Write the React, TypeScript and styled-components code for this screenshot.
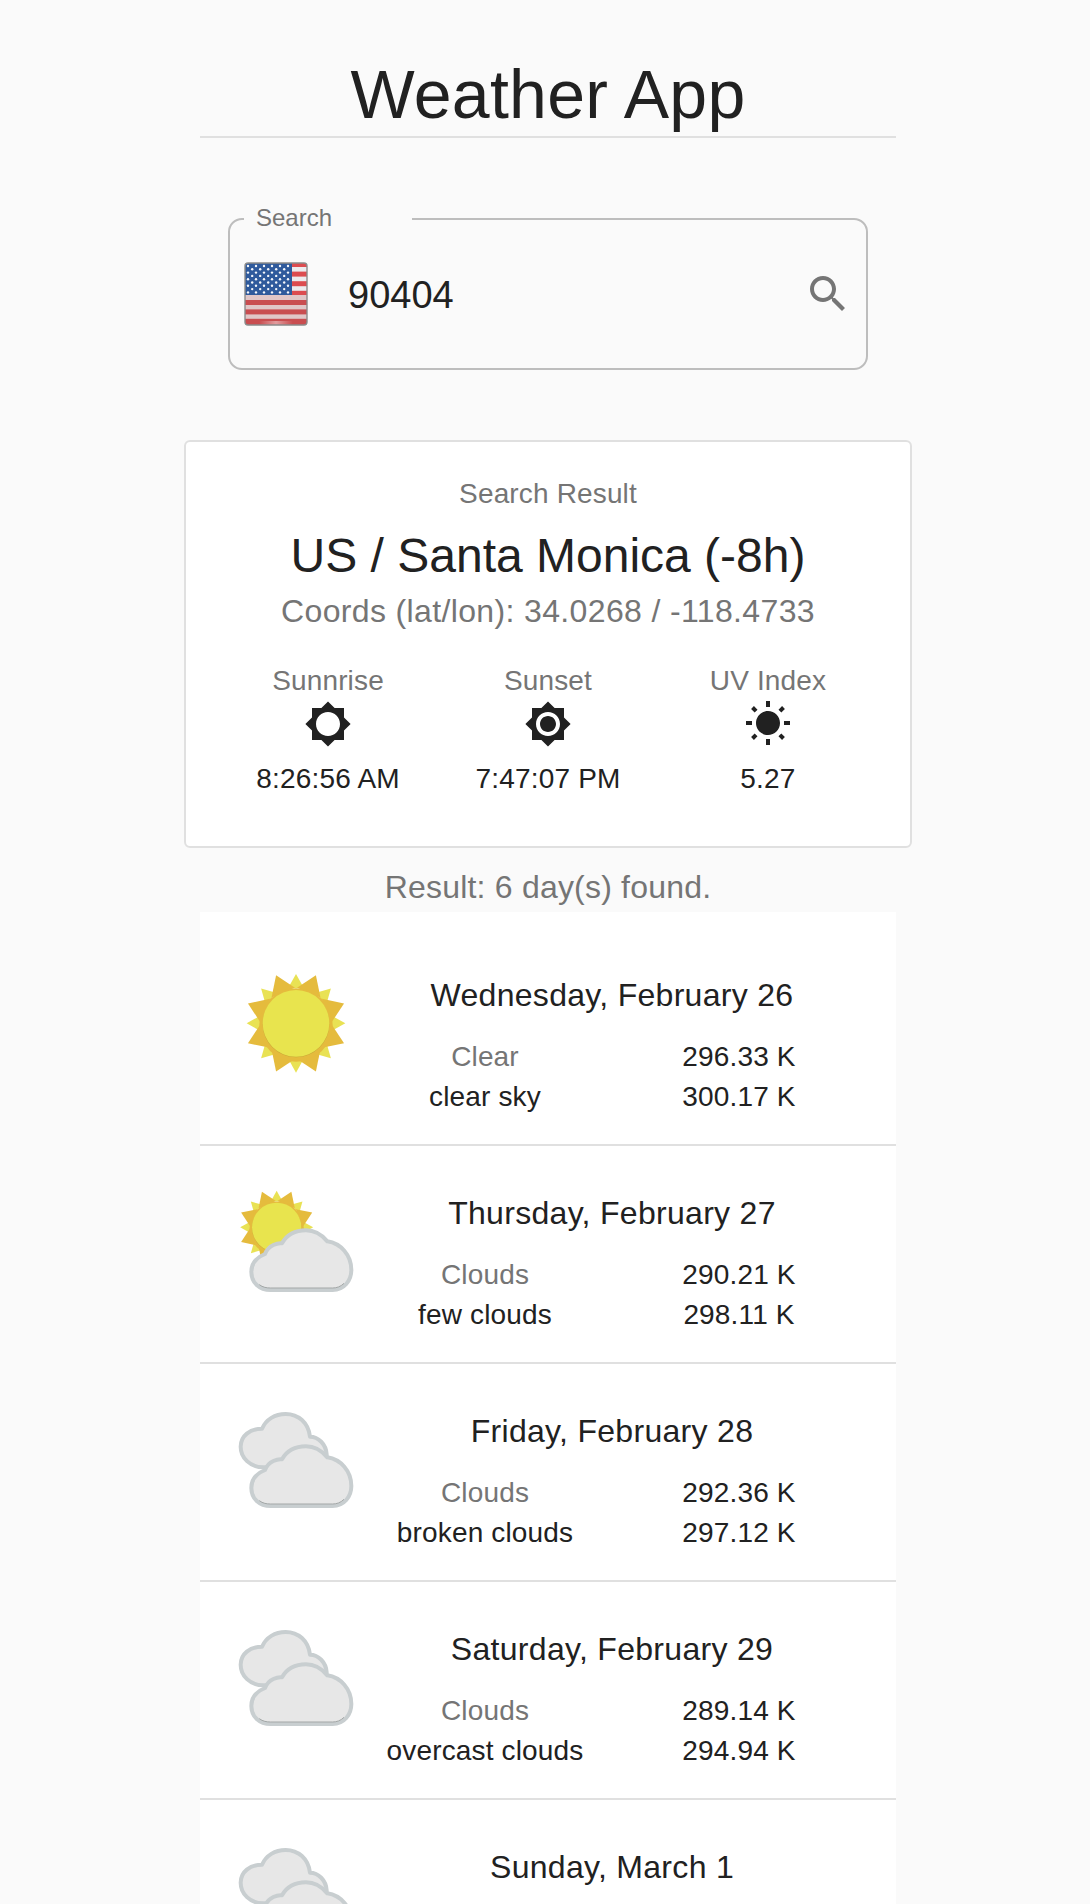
import React from 'react';
import styled, { createGlobalStyle } from 'styled-components';

const GlobalStyle = createGlobalStyle`
  html, body {
    margin: 0;
    padding: 0;
    background: #fafafa;
    height: 1904px;
    overflow: hidden;
  }
  body {
    font-family: 'Liberation Sans', Arial, sans-serif;
    color: #212121;
    letter-spacing: 0.00938em;
  }
`;

const Page = styled.div`
  display: flex;
  flex-direction: column;
  align-items: center;
  width: 1084px;
  height: 1904px;
  margin-left: 6px;
  overflow: hidden;
  > * {
    flex: none;
  }
`;

const Header = styled.header`
  width: 696px;
  padding: 54px 0 2px;
  border-bottom: 2px solid #e0e0e0;
`;

const Title = styled.h1`
  margin: 0;
  font-size: 68px;
  font-weight: 400;
  line-height: 80px;
  letter-spacing: 0.3px;
  text-align: center;
`;

const SearchBox = styled.fieldset`
  box-sizing: border-box;
  width: 640px;
  height: 167px;
  margin: 65px 0 0;
  padding: 0;
  border: 2px solid #bdbdbd;
  border-radius: 14px;
`;

const SearchLegend = styled.legend`
  box-sizing: border-box;
  width: 168px;
  margin-left: 14px;
  padding: 0 0 2px 12px;
  font-size: 24px;
  line-height: 30px;
  letter-spacing: 0;
  color: #757575;
`;

const SearchRow = styled.div`
  display: flex;
  align-items: center;
  height: 118px;
  padding: 0 14px;
`;

const SearchValue = styled.div`
  flex: 1;
  margin-left: 40px;
  padding-top: 2px;
  font-size: 38px;
  line-height: 48px;
  letter-spacing: 0;
`;

const Card = styled.section`
  box-sizing: border-box;
  width: 728px;
  height: 408px;
  margin-top: 70px;
  padding-top: 34px;
  background: #fff;
  border: 2px solid #e0e0e0;
  border-radius: 6px;
  text-align: center;
`;

const Overline = styled.div`
  font-size: 28px;
  line-height: 36px;
  color: #757575;
`;

const Location = styled.h2`
  margin: 16px 0 0;
  font-size: 48px;
  font-weight: 400;
  line-height: 56px;
  letter-spacing: 0;
`;

const Coords = styled.div`
  margin-top: 7px;
  font-size: 32px;
  line-height: 40px;
  letter-spacing: 0.36px;
  color: #757575;
`;

const Stats = styled.div`
  display: grid;
  grid-template-columns: repeat(3, 220px);
  justify-content: center;
  margin-top: 32px;
`;

const Stat = styled.div`
  display: flex;
  flex-direction: column;
  align-items: center;
`;

const StatLabel = styled.div`
  margin-bottom: 1px;
  font-size: 28px;
  line-height: 36px;
  color: #757575;
`;

const StatValue = styled.div`
  margin-top: 13px;
  font-size: 28px;
  line-height: 36px;
  letter-spacing: 0.2px;
`;

const ResultCount = styled.div`
  margin-top: 19px;
  font-size: 32px;
  line-height: 40px;
  letter-spacing: 0.2px;
  color: #757575;
`;

const List = styled.ul`
  box-sizing: border-box;
  width: 696px;
  margin: 5px 0 0;
  padding: 16px 0 0;
  list-style: none;
  background: #fff;
`;

const Row = styled.li<{ $last?: boolean }>`
  display: flex;
  box-sizing: border-box;
  height: 218px;
  padding: 24px 30px 0 20px;
  border-bottom: ${p => (p.$last ? 'none' : '2px solid #e0e0e0')};
`;

const IconSlot = styled.svg`
  flex: none;
  display: block;
  width: 138px;
  height: 150px;
`;

const RowBody = styled.div`
  flex: 1;
  padding-top: 25px;
  text-align: center;
`;

const DateLine = styled.div`
  font-size: 32px;
  line-height: 36px;
  letter-spacing: 0.3px;
`;

const Readings = styled.div`
  display: grid;
  grid-template-columns: 1fr 1fr;
  margin-top: 24px;
  font-size: 28px;
  line-height: 40px;
`;

const Condition = styled.div`
  color: #757575;
`;

const MuiIcon = styled.svg<{ $size: number; $color: string }>`
  flex: none;
  display: block;
  width: ${p => p.$size}px;
  height: ${p => p.$size}px;
  fill: ${p => p.$color};
`;

const FlagIcon = () => (
  <svg width="64" height="64" viewBox="0 0 64 64">
    <defs>
      <clipPath id="flagClip">
        <rect x="1" y="1" width="62" height="62" rx="3" />
      </clipPath>
      <linearGradient id="flagGlow" x1="0" x2="1">
        <stop offset="0.15" stopColor="#fff" stopOpacity="0" />
        <stop offset="0.5" stopColor="#fff" stopOpacity="0.45" />
        <stop offset="0.85" stopColor="#fff" stopOpacity="0" />
      </linearGradient>
    </defs>
    <g clipPath="url(#flagClip)">
      <rect x="0" y="0" width="64" height="64" fill="#ececee" />
      {[0, 9.6, 19.2, 28.8].map(y => (
        <rect key={y} x="0" y={y} width="64" height="5" fill="#dc4c50" />
      ))}
      <rect x="0" y="33" width="64" height="31" fill="#e0c6c7" />
      {[38, 47.4, 56.8].map(y => (
        <rect key={y} x="0" y={y} width="64" height="5" fill="#c94d50" />
      ))}
      <rect x="0" y="61" width="64" height="3" fill="#c94d50" />
      <rect x="1" y="1" width="47" height="32" fill="#2f5a9c" />
      {Array.from({ length: 9 }, (_, r) =>
        Array.from({ length: r % 2 ? 5 : 6 }, (_, c) => (
          <circle key={`${r}-${c}`} cx={(r % 2 ? 8.2 : 4) + c * 8} cy={4 + r * 3.3} r="1.2" fill="#f4f6fa" />
        )),
      )}
      <rect x="8" y="59" width="48" height="4" fill="url(#flagGlow)" />
    </g>
    <rect x="1" y="1" width="62" height="62" rx="3" fill="none" stroke="#8b8b8b" strokeWidth="1.4" />
  </svg>
);

// sun and clouds are drawn in 3x units, the svg is 138 x 150 px
const spike = (cx: number, cy: number, deg: number, tip: number, base: number, half: number) => {
  const a = (deg * Math.PI) / 180;
  const ux = Math.sin(a);
  const uy = -Math.cos(a);
  const pt = (r: number, s: number) => `${cx + ux * r - uy * s},${cy + uy * r + ux * s}`;
  return `${pt(tip, 0)} ${pt(base, half)} ${pt(base, -half)}`;
};

const Sun = ({ cx, cy, k }: { cx: number; cy: number; k: number }) => (
  <g>
    {Array.from({ length: 8 }, (_, i) => (
      <polygon key={i} points={spike(cx, cy, i * 45, 148 * k, 105 * k, 24 * k)} fill="#e9e254" />
    ))}
    {Array.from({ length: 8 }, (_, i) => (
      <polygon key={i} points={spike(cx, cy, 22.5 + i * 45, 156 * k, 100 * k, 38 * k)} fill="#e5bb3d" />
    ))}
    <circle cx={cx} cy={cy + 5 * k} r={110 * k} fill="#e5bb3d" />
    <circle cx={cx} cy={cy + 2 * k} r={100 * k} fill="#c9a736" />
    <circle cx={cx} cy={cy} r={100 * k} fill="#e8e44e" />
  </g>
);

const FRONT_CLOUD =
  'M152 360H338C372 360 394 332 394 300C394 255 362 220 322 214C305 194 285 181 258 181C225 181 200 195 186 220C175 218 145 225 135 252C110 262 94 280 94 306C94 338 118 360 152 360Z';
const BACK_CLOUD =
  'M130 234C90 234 62 205 62 172C62 140 90 118 126 118C138 90 165 74 197 74C235 74 265 100 270 142C295 142 318 165 320 195L320 240L130 234Z';
const FRONT_SHADE = 'M118 344C128 352 140 354 152 354H338C350 354 362 350 372 340';

const Cloud = ({ d, dy = 0, shade }: { d: string; dy?: number; shade?: string }) => (
  <g transform={`translate(0 ${dy})`}>
    <path d={d} fill="#e7e7e7" stroke="#c8ced0" strokeWidth="12" strokeLinejoin="round" />
    {shade && <path d={shade} fill="none" stroke="#a3a7a7" strokeWidth="3" />}
  </g>
);

type Sky = 'clear' | 'few' | 'clouds';

const SkyIcon = ({ sky }: { sky: Sky }) => (
  <IconSlot viewBox="0 0 414 450">
    {sky === 'clear' && <Sun cx={228} cy={214} k={1} />}
    {sky === 'few' && (
      <>
        <Sun cx={170} cy={172} k={0.74} />
        <Cloud d={FRONT_CLOUD} shade={FRONT_SHADE} />
      </>
    )}
    {sky === 'clouds' && (
      <>
        <Cloud d={BACK_CLOUD} dy={4} />
        <Cloud d={FRONT_CLOUD} dy={-6} shade={FRONT_SHADE} />
      </>
    )}
  </IconSlot>
);

const days: { date: string; sky: Sky; main: string; desc: string; low: string; high: string }[] = [
  { date: 'Wednesday, February 26', sky: 'clear', main: 'Clear', desc: 'clear sky', low: '296.33 K', high: '300.17 K' },
  { date: 'Thursday, February 27', sky: 'few', main: 'Clouds', desc: 'few clouds', low: '290.21 K', high: '298.11 K' },
  { date: 'Friday, February 28', sky: 'clouds', main: 'Clouds', desc: 'broken clouds', low: '292.36 K', high: '297.12 K' },
  { date: 'Saturday, February 29', sky: 'clouds', main: 'Clouds', desc: 'overcast clouds', low: '289.14 K', high: '294.94 K' },
];

export default function App() {
  return (
    <>
      <GlobalStyle />
      <Page>
        <Header>
          <Title>Weather App</Title>
        </Header>

        <SearchBox>
          <SearchLegend>Search</SearchLegend>
          <SearchRow>
            <FlagIcon />
            <SearchValue>90404</SearchValue>
            <MuiIcon $size={48} $color="#757575" viewBox="0 0 24 24">
              <path d="M15.5 14h-.79l-.28-.27C15.41 12.59 16 11.11 16 9.5 16 5.91 13.09 3 9.5 3S3 5.91 3 9.5 5.91 16 9.5 16c1.61 0 3.09-.59 4.23-1.57l.27.28v.79l5 4.99L20.49 19l-4.99-5zm-6 0C7.01 14 5 11.99 5 9.5S7.01 5 9.5 5 14 7.01 14 9.5 11.99 14 9.5 14z" />
            </MuiIcon>
          </SearchRow>
        </SearchBox>

        <Card>
          <Overline>Search Result</Overline>
          <Location>US / Santa Monica (-8h)</Location>
          <Coords>Coords (lat/lon): 34.0268 / -118.4733</Coords>
          <Stats>
            <Stat>
              <StatLabel>Sunnrise</StatLabel>
              <MuiIcon $size={48} $color="#212121" viewBox="0 0 24 24">
                <path d="M20 15.31L23.31 12 20 8.69V4h-4.69L12 .69 8.69 4H4v4.69L.69 12 4 15.31V20h4.69L12 23.31 15.31 20H20v-4.69zM12 18c-3.31 0-6-2.69-6-6s2.69-6 6-6 6 2.69 6 6-2.69 6-6 6z" />
              </MuiIcon>
              <StatValue>8:26:56 AM</StatValue>
            </Stat>
            <Stat>
              <StatLabel>Sunset</StatLabel>
              <MuiIcon $size={48} $color="#212121" viewBox="0 0 24 24">
                <path d="M20 8.69V4h-4.69L12 .69 8.69 4H4v4.69L.69 12 4 15.31V20h4.69L12 23.31 15.31 20H20v-4.69L23.31 12 20 8.69zM12 18c-3.31 0-6-2.69-6-6s2.69-6 6-6 6 2.69 6 6-2.69 6-6 6zm0-10c-2.21 0-4 1.79-4 4s1.79 4 4 4 4-1.79 4-4-1.79-4-4-4z" />
              </MuiIcon>
              <StatValue>7:47:07 PM</StatValue>
            </Stat>
            <Stat>
              <StatLabel>UV Index</StatLabel>
              <MuiIcon $size={48} $color="#212121" viewBox="0 0 24 24">
                <path d="M6.76 4.84l-1.8-1.79-1.41 1.41 1.79 1.79 1.42-1.41zM4 10.5H1v2h3v-2zm9-9.95h-2V3.5h2V.55zm7.45 3.91l-1.41-1.41-1.79 1.79 1.41 1.41 1.79-1.79zm-3.21 13.7l1.79 1.8 1.41-1.41-1.8-1.79-1.4 1.4zM20 10.5v2h3v-2h-3zm-8-5c-3.31 0-6 2.69-6 6s2.69 6 6 6 6-2.69 6-6-2.69-6-6-6zm-1 16.95h2V19.5h-2v2.95zm-7.45-3.91l1.41 1.41 1.79-1.8-1.41-1.41-1.79 1.8z" />
              </MuiIcon>
              <StatValue>5.27</StatValue>
            </Stat>
          </Stats>
        </Card>

        <ResultCount>Result: 6 day(s) found.</ResultCount>

        <List>
          {days.map(day => (
            <Row key={day.date}>
              <SkyIcon sky={day.sky} />
              <RowBody>
                <DateLine>{day.date}</DateLine>
                <Readings>
                  <Condition>{day.main}</Condition>
                  <div>{day.low}</div>
                  <div>{day.desc}</div>
                  <div>{day.high}</div>
                </Readings>
              </RowBody>
            </Row>
          ))}
          <Row $last>
            <SkyIcon sky="clouds" />
            <RowBody>
              <DateLine>Sunday, March 1</DateLine>
            </RowBody>
          </Row>
        </List>
      </Page>
    </>
  );
}
